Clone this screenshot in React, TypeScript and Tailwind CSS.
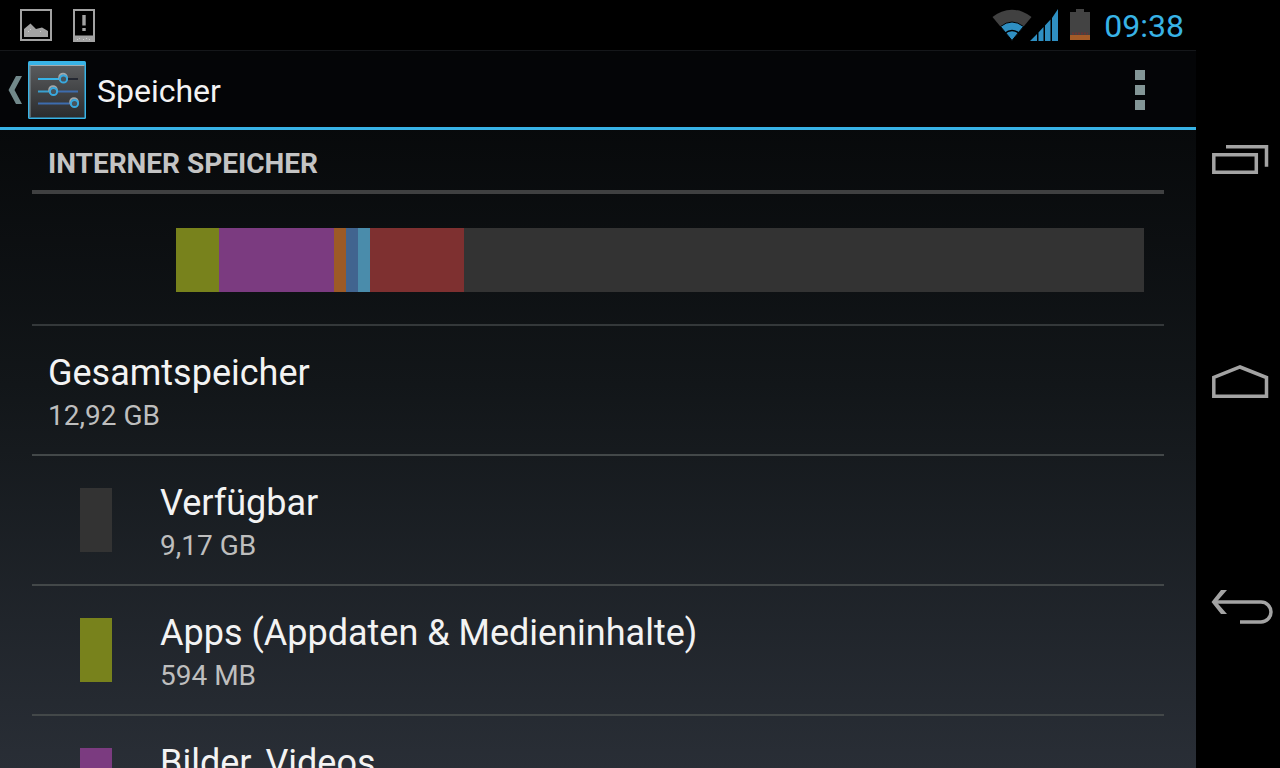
import React from "react";

type Segment = { name: string; share: number; color: string };

const segments: Segment[] = [
  { name: "Apps", share: 43, color: "bg-[#78821c]" },
  { name: "Bilder, Videos", share: 115, color: "bg-[#7b3b80]" },
  { name: "Audio", share: 12, color: "bg-[#9c5a26]" },
  { name: "Downloads", share: 12, color: "bg-[#41648f]" },
  { name: "Cache", share: 12, color: "bg-[#4a8cab]" },
  { name: "Sonstiges", share: 94, color: "bg-[#7e3030]" },
  { name: "Verfügbar", share: 680, color: "bg-[#333333]" },
];

type Item = { title: string; size?: string; swatch?: string };

const items: Item[] = [
  { title: "Gesamtspeicher", size: "12,92 GB" },
  { title: "Verfügbar", size: "9,17 GB", swatch: "bg-[#333333]" },
  { title: "Apps (Appdaten & Medieninhalte)", size: "594 MB", swatch: "bg-[#78821c]" },
  { title: "Bilder, Videos", swatch: "bg-[#7b3b80]" },
];

function PictureIcon() {
  return (
    <svg width="34" height="34" viewBox="0 0 34 34" aria-hidden="true">
      <rect x="2" y="2" width="30" height="30" fill="none" stroke="#a3a3a3" strokeWidth="2" />
      <path d="M5 29v-8l6.500-5.500 5.500 5.500 6-1.500 6 3.500v6z" fill="#a3a3a3" />
      <path d="M9 23h1v1H9zM11 21h1v1h-1zM21 23h1v1h-1z" fill="#d0d0d0" />
    </svg>
  );
}

function PhoneAlertIcon() {
  return (
    <svg width="24" height="34" viewBox="0 0 24 34" aria-hidden="true">
      <path d="M1 1h22v33H1zM3 3v24.500h18V3z" fill="#a3a3a3" fillRule="evenodd" />
      <path d="M10.300 7h3.400v10.500h-3.400zM10.300 20h3.400v3h-3.400z" fill="#a3a3a3" />
      <path d="M5 31h1v1H5zM7 30h1v1H7zM11 31h1v1h-1zM14 30h1v1h-1zM17 31h1v1h-1z" fill="#d0d0d0" />
    </svg>
  );
}

function WifiIcon() {
  return (
    <svg width="40" height="34" viewBox="0 0 40 34" aria-hidden="true">
      <path d="M20 32.500L.5 9A30 30 0 0 1 39.500 9z" fill="#414141" />
      <path d="M20 32.500L8.500 18.500Q20 9.500 31.500 18.500z" fill="#2f8fc2" stroke="#000" strokeWidth="1" />
      <path d="M12.500 25.500Q20 19.500 27.500 25.500" fill="none" stroke="#000" strokeWidth="1.500" />
    </svg>
  );
}

function SignalIcon() {
  return (
    <svg width="30" height="34" viewBox="0 0 30 34" aria-hidden="true">
      <path
        d="M0 33L7 26V33zM8.500 24.500L13.500 19V33H8.500zM15 17.500L20.500 11.500V33H15zM22 10L28 1V33H22z"
        fill="#2f8fc2"
      />
    </svg>
  );
}

function BatteryIcon() {
  return (
    <svg width="20" height="34" viewBox="0 0 20 34" aria-hidden="true">
      <path d="M0 4h6V1h8v3h6v28H0z" fill="#434343" />
      <path d="M0 27h20v5H0z" fill="#a35b28" />
      <path d="M2 25.500h16" stroke="#6b3434" strokeWidth="2" strokeDasharray="2 1" />
    </svg>
  );
}

function SettingsIcon() {
  return (
    <svg width="58" height="58" viewBox="0 0 58 58" aria-hidden="true">
      <defs>
        <linearGradient id="tile" x1="0" y1="0" x2="0" y2="1">
          <stop offset="0" stopColor="#5a5c5e" />
          <stop offset="1" stopColor="#2b2c2e" />
        </linearGradient>
      </defs>
      <rect width="58" height="58" rx="1.500" fill="#38b3e6" />
      <rect x="1.500" y="4" width="55" height="52.500" fill="url(#tile)" />
      <path d="M1.500 4.500h55" stroke="#a3adb0" strokeWidth="1" />
      <path d="M2 4v52" stroke="#82949b" strokeWidth="1" />
      <path d="M50 18h-10" stroke="#242832" strokeWidth="2" />
      <path d="M10 18h22" stroke="#38b3e6" strokeWidth="2" />
      <path d="M10 30.500h12" stroke="#38a0cf" strokeWidth="2" />
      <path d="M29 30.500h21M10 42.500h33" stroke="#3d6cae" strokeWidth="2" />
      <g fill="none" strokeWidth="2">
        <g stroke="#a3a7a9">
          <circle cx="35" cy="16.500" r="3.800" />
          <circle cx="25" cy="29" r="3.800" />
          <circle cx="46" cy="41" r="3.800" />
        </g>
        <g stroke="#38a9df" fill="#48545c">
          <circle cx="35.500" cy="18" r="3.600" />
          <circle cx="25.500" cy="30.500" r="3.600" />
          <circle cx="46.500" cy="42.500" r="3.600" />
        </g>
      </g>
    </svg>
  );
}

function StatusBar() {
  return (
    <header className="flex h-[51px] items-center justify-between border-b border-[#15171a] bg-black pl-[19px] pr-3">
      <div className="flex gap-[19px]">
        <PictureIcon />
        <PhoneAlertIcon />
      </div>
      <div className="flex items-center">
        <WifiIcon />
        <span className="-ml-0.5 flex">
          <SignalIcon />
        </span>
        <span className="ml-2.5 flex">
          <BatteryIcon />
        </span>
        <time className="ml-3.5 pt-0.5 text-[32px] leading-[48px] text-[#38b3e6]">09:38</time>
      </div>
    </header>
  );
}

function ActionBar() {
  return (
    <div className="flex h-[79px] items-center justify-between border-b-[3px] border-[#38b3e6] bg-[#040507] pl-2 pt-0.5">
      <button type="button" aria-label="Zurück zu Einstellungen" className="flex items-center gap-1.5">
        <svg width="14" height="28" viewBox="0 0 14 28" aria-hidden="true">
          <path d="M8 0h6L6.500 14 14 28H8L.5 14z" fill="#71888a" />
        </svg>
        <SettingsIcon />
      </button>
      <h1 className="ml-[11px] flex-1 pt-0.5 text-[32px] leading-[40px] text-[#f3f3f3]">Speicher</h1>
      <button type="button" aria-label="Weitere Optionen" className="flex w-28 flex-col items-center gap-[5px]">
        <span className="size-2.5 bg-[#839696]" />
        <span className="size-2.5 bg-[#839696]" />
        <span className="size-2.5 bg-[#839696]" />
      </button>
    </div>
  );
}

function StorageBar() {
  return (
    <div className="border-b-2 border-[#34383a] pb-8 pl-36 pr-5 pt-[34px]">
      <div className="flex h-16">
        {segments.map((s) => (
          <div key={s.name} className={s.color} style={{ flexGrow: s.share, flexBasis: 0 }} />
        ))}
      </div>
    </div>
  );
}

function StorageRow({ title, size, swatch }: Item) {
  return (
    <li className="flex h-[130px] border-b-2 border-[#434849]">
      {swatch && (
        <span className="flex w-28 shrink-0 items-center pl-12">
          <span className={`h-16 w-8 ${swatch}`} />
        </span>
      )}
      <div className="pl-4 pt-[26px]">
        <h3 className="text-[36px] leading-[42px] text-[#f3f3f3]">{title}</h3>
        {size && <p className="text-[28px] leading-[44px] text-[#bebebe]">{size}</p>}
      </div>
    </li>
  );
}

function NavigationBar() {
  return (
    <nav className="flex w-[84px] shrink-0 flex-col items-center justify-around bg-black pb-[50px] pl-1 pt-[46px]">
      <button type="button" aria-label="Letzte Apps" className="flex">
        <svg width="64" height="36" viewBox="0 0 64 36" fill="none" stroke="#a3a3a3" strokeWidth="3.500">
          <path d="M5.800 14.700h42.500v17.500H5.800zM18 6.700h40.500v20" />
        </svg>
      </button>
      <button type="button" aria-label="Startseite" className="flex">
        <svg width="64" height="36" viewBox="0 0 64 36" fill="none" stroke="#a3a3a3" strokeWidth="3.500">
          <path d="M5.800 32.200V13.500L32 3l26.500 10.500v18.700z" />
        </svg>
      </button>
      <button type="button" aria-label="Zurück" className="flex">
        <svg width="66" height="36" viewBox="0 0 66 36" fill="none" stroke="#a3a3a3" strokeWidth="3.500">
          <path d="M8 14h46a9.500 9.500 0 0 1 0 20H33" />
          <path d="M14 2h6L9.500 14 20 26h-6L4.500 14z" fill="#a3a3a3" stroke="none" />
        </svg>
      </button>
    </nav>
  );
}

export default function App() {
  return (
    <div className="flex h-screen overflow-hidden bg-black font-['Roboto',sans-serif]">
      <div className="flex min-w-0 flex-1 flex-col bg-linear-to-b/srgb from-[#020304] via-[#121619] to-[#292e36]">
        <StatusBar />
        <ActionBar />
        <main className="min-h-0 flex-1 overflow-hidden px-8">
          <h2 className="border-b-4 border-[#3f4041] px-4 pb-1.5 pt-3.5 text-[28px] font-bold leading-[40px] text-[#c4c4c4]">
            INTERNER SPEICHER
          </h2>
          <StorageBar />
          <ul>
            {items.map((item) => (
              <StorageRow key={item.title} {...item} />
            ))}
          </ul>
        </main>
      </div>
      <NavigationBar />
    </div>
  );
}
